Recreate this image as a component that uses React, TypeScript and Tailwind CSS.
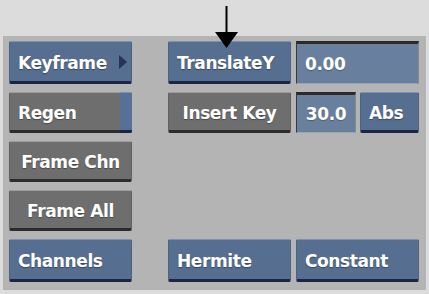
import React from 'react';

type Tone = 'blue' | 'gray';

function Btn({ label, tone = 'blue', center = false, children }: { label: string; tone?: Tone; center?: boolean; children?: React.ReactNode }) {
  const toneCls =
    tone === 'blue'
      ? 'bg-[#566e8f] border-t-[#7d92b0] border-b-[#1e2444] border-x-[#4d6383]'
      : 'bg-[#6e6e6e] border-t-[#9c9c9c] border-b-[#2c2c2c] border-x-[#606060]';
  return (
    <div
      className={`relative flex items-center h-full rounded-[2px] border-t border-x border-b-[3px] pt-[3px] ${toneCls} ${
        center ? 'justify-center' : 'pl-[8px]'
      }`}
    >
      <span className="text-white font-bold text-[17px] leading-none tracking-[-0.4px] [text-shadow:0_1px_1px_rgba(0,0,0,0.35)]">
        {label}
      </span>
      {children}
    </div>
  );
}

function Field({ value, center = false }: { value: string; center?: boolean }) {
  return (
    <div
      className={`flex items-center h-full bg-[#68809d] border-t-[3px] border-t-[#2b2b2b] border-l border-l-[#3a3a3a] border-r border-r-[#8a8a8a] border-b border-b-[#9aa4b0] pt-[1px] ${
        center ? 'justify-center' : 'pl-[8px]'
      }`}
    >
      <span className="text-white font-bold text-[17px] leading-none tracking-[-0.4px] [text-shadow:0_1px_1px_rgba(0,0,0,0.3)]">
        {value}
      </span>
    </div>
  );
}

export default function App() {
  return (
    <div
      className="relative w-[429px] h-[294px] bg-[#dcdcdc] pt-[36px] pl-[3px] overflow-hidden"
      style={{ fontFamily: '"DejaVu Sans", Verdana, sans-serif' }}
    >
      <div className="w-[423px] h-[254px] bg-[#b4b4b4] pl-[6px] pt-[5px]">
        <div className="grid grid-cols-[123px_123px_123px] grid-rows-[43px_41px_41px_41px_43px] gap-y-[8px]">
          {/* row 1 */}
          <Btn label="Keyframe">
            <svg className="absolute right-[4px] top-1/2 -translate-y-1/2" width="8" height="14" viewBox="0 0 8 14">
              <polygon points="0,0 8,7 0,14" fill="#2a3255" />
            </svg>
          </Btn>
          <div className="ml-[36px] w-[123px]">
            <Btn label="TranslateY" />
          </div>
          <div className="ml-[41px] w-[123px]">
            <Field value="0.00" />
          </div>

          {/* row 2 */}
          <div className="relative h-full">
            <Btn label="Regen" tone="gray" />
            <div className="absolute right-0 top-0 bottom-0 w-[12px] rounded-r-[2px] bg-[#56709a] border-t border-t-[#7d92b0] border-b-[3px] border-b-[#1e2444]" />
          </div>
          <div className="ml-[36px] w-[123px]">
            <Btn label="Insert Key" tone="gray" center />
          </div>
          <div className="ml-[41px] w-[123px] flex gap-[4px]">
            <div className="w-[60px] h-full">
              <Field value="30.0" center />
            </div>
            <div className="w-[59px] h-full">
              <Btn label="Abs" />
            </div>
          </div>

          {/* row 3 */}
          <Btn label="Frame Chn" tone="gray" center />
          <div />
          <div />

          {/* row 4 */}
          <Btn label="Frame All" tone="gray" center />
          <div />
          <div />

          {/* row 5 */}
          <Btn label="Channels" />
          <div className="ml-[36px] w-[123px]">
            <Btn label="Hermite" />
          </div>
          <div className="ml-[41px] w-[123px]">
            <Btn label="Constant" />
          </div>
        </div>
      </div>

      <svg className="absolute left-[214px] top-[6px]" width="26" height="44" viewBox="0 0 26 44">
        <line x1="12.5" y1="0" x2="12.5" y2="30" stroke="#000" strokeWidth="2" />
        <polygon points="1,26 24,26 12.5,42" fill="#000" />
      </svg>
    </div>
  );
}
